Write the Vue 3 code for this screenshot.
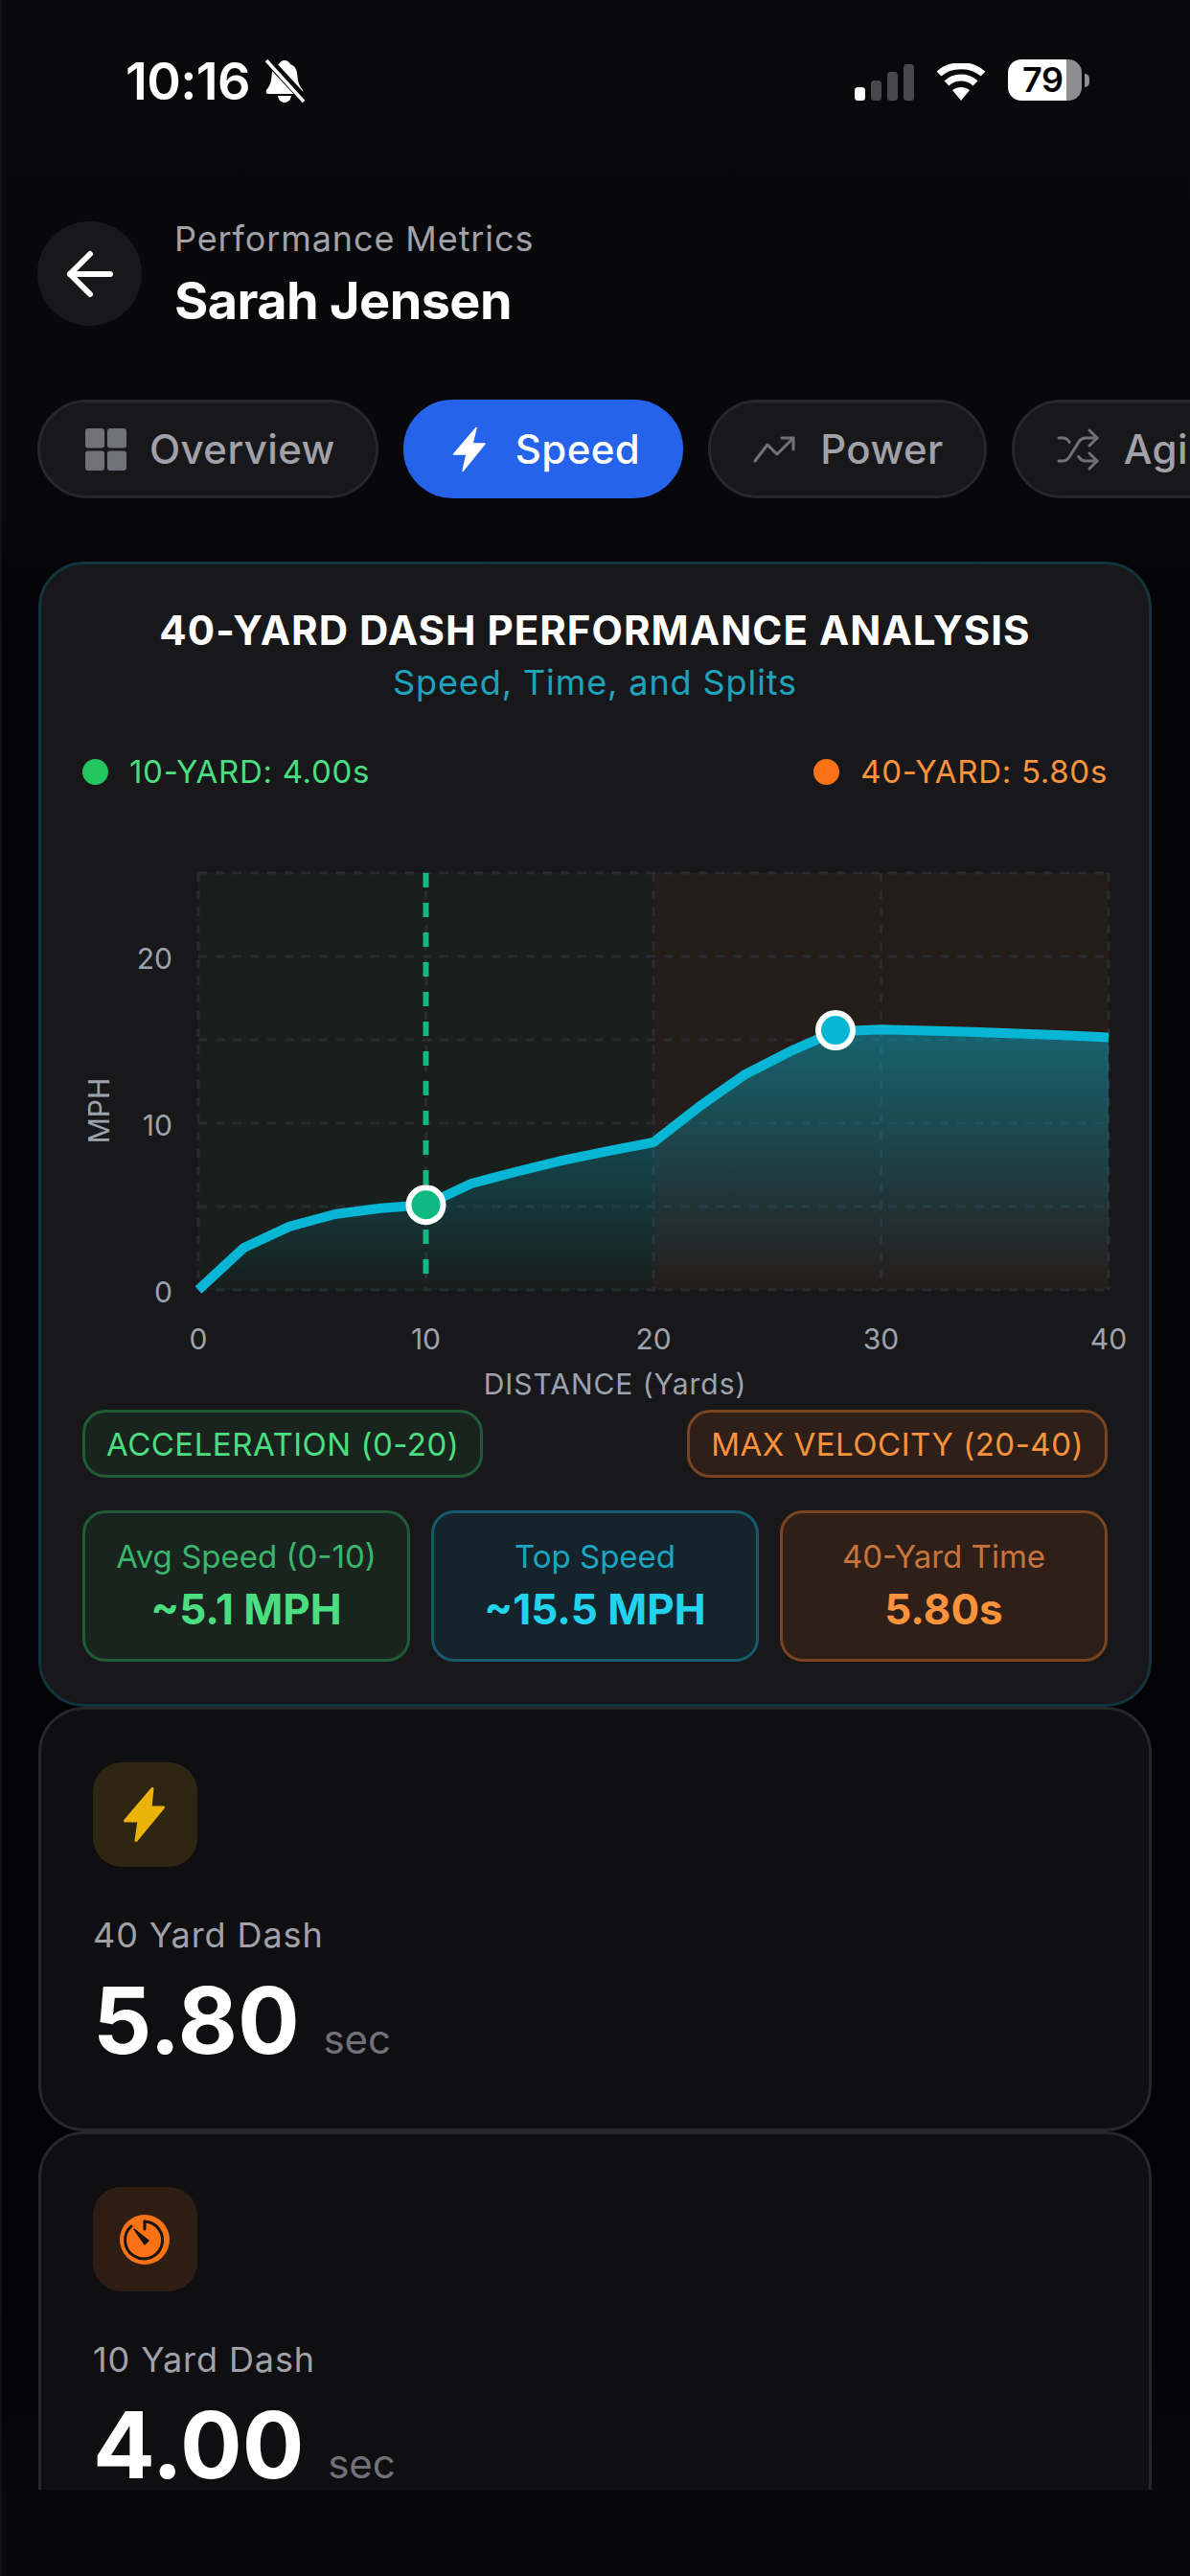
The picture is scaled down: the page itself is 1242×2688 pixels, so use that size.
<script setup>
import { computed } from 'vue'

// mph at every 2 yards
const speeds = [0, 2.53, 3.8, 4.54, 4.9, 5.1, 6.38, 7.1, 7.76, 8.33, 8.85, 10.98, 12.9, 14.3, 15.5, 15.62, 15.55, 15.47, 15.37, 15.27, 15.15]

const xAt = (yards) => 207 + yards * 23.75
const yAt = (mph) => 1347 - mph * 17.4

const linePoints = computed(() => speeds.map((s, i) => `${xAt(i * 2)},${yAt(s)}`).join(' '))
const areaPoints = computed(() => `${linePoints.value} ${xAt(40)},${yAt(0)} ${xAt(0)},${yAt(0)}`)

const gridY = [0, 5, 10, 15, 20, 25]
const gridX = [0, 10, 20, 30, 40]
const yTicks = [0, 10, 20]

const tabs = [
  { id: 'overview', label: 'Overview' },
  { id: 'speed', label: 'Speed', active: true },
  { id: 'power', label: 'Power' },
  { id: 'agility', label: 'Agility' }
]

const stats = [
  { label: 'Avg Speed (0-10)', value: '~5.1 MPH', tone: 'green' },
  { label: 'Top Speed', value: '~15.5 MPH', tone: 'cyan' },
  { label: '40-Yard Time', value: '5.80s', tone: 'orange' }
]
</script>

<template>
  <div class="page">
    <div class="statusbar">
      <div class="status-left">
        <span class="time">10:16</span>
        <svg class="bell" width="42" height="46" viewBox="0 0 42 46">
          <path d="M21 1c3 0 5 2 6 4 6 2 7 7 7.500 13 .5 6 2 10 5.500 14 1 2 0 4-2 4H4c-2 0-3-2-2-4 3.500-4 5-8 5.500-14C8 12 9 7 15 5c1-2 3-4 6-4z" fill="#fff" />
          <path d="M14 38h14c-1 5-4 7-7 7s-6-2-7-7z" fill="#fff" />
          <path d="M3 0 L42 42" stroke="#08080b" stroke-width="9" />
          <path d="M2 1 L41 44" stroke="#fff" stroke-width="3.500" />
        </svg>
      </div>
      <div class="status-right">
        <div class="signal">
          <i class="bar bar-1"></i>
          <i class="bar bar-2"></i>
          <i class="bar bar-3"></i>
          <i class="bar bar-4"></i>
        </div>
        <svg class="wifi" width="52" height="39" viewBox="0 0 52 39">
          <path d="M26 39 L17 28 C22 24 30 24 35 28 Z" fill="#fff" />
          <path d="M11 21 C19 13 33 13 41 21" fill="none" stroke="#fff" stroke-width="7" />
          <path d="M3 11 C15 0 37 0 49 11" fill="none" stroke="#fff" stroke-width="7" />
        </svg>
        <div class="battery">
          <div class="battery-body"><span>79</span></div>
          <i class="battery-nub"></i>
        </div>
      </div>
    </div>

    <div class="header">
      <button class="back" type="button">
        <svg width="72" height="72" viewBox="0 0 24 24" fill="none" stroke="#fff" stroke-width="2" stroke-linecap="round" stroke-linejoin="round">
          <path d="m12 19-7-7 7-7" />
          <path d="M19 12H5" />
        </svg>
      </button>
      <div>
        <div class="eyebrow">Performance Metrics</div>
        <div class="name">Sarah Jensen</div>
      </div>
    </div>

    <div class="tabs">
      <div v-for="tab in tabs" :key="tab.id" class="tab" :class="{ 'tab--active': tab.active }">
        <svg v-if="tab.id === 'overview'" width="48" height="48" viewBox="0 0 48 48" fill="#71717a">
          <rect x="5" y="2" width="20" height="20.500" rx="3" />
          <rect x="28" y="2" width="20" height="20.500" rx="3" />
          <rect x="5" y="25.500" width="20" height="20.500" rx="3" />
          <rect x="28" y="25.500" width="20" height="20.500" rx="3" />
        </svg>
        <svg v-else-if="tab.id === 'speed'" width="48" height="48" viewBox="0 0 48 48">
          <path d="M31 1.500 L7.500 29 H21 L17 46.500 L40 18 H27 Z" fill="#fff" stroke="#fff" stroke-width="1.500" stroke-linejoin="round" />
        </svg>
        <svg v-else-if="tab.id === 'power'" width="48" height="48" viewBox="0 0 24 24" fill="none" stroke="#71717a" stroke-width="1.500" stroke-linecap="round" stroke-linejoin="round">
          <path d="M22 6 13.500 14.500 8.500 9.500 2 18" />
          <path d="M16 6h6v6" />
        </svg>
        <svg v-else width="48" height="48" viewBox="0 0 24 24" fill="none" stroke="#71717a" stroke-width="1.500" stroke-linecap="round" stroke-linejoin="round">
          <path d="m18 14 4 4-4 4" />
          <path d="m18 2 4 4-4 4" />
          <path d="M2 18h1.973a4 4 0 0 0 3.300-1.700l5.454-8.600a4 4 0 0 1 3.300-1.700H22" />
          <path d="M2 6h1.972a4 4 0 0 1 3.600 2.200" />
          <path d="M22 18h-6.041a4 4 0 0 1-3.300-1.800l-.359-.450" />
        </svg>
        <span>{{ tab.label }}</span>
      </div>
    </div>

    <main class="content">
      <section class="chart-card">
        <h2 class="chart-title">40-YARD DASH PERFORMANCE ANALYSIS</h2>
        <p class="chart-sub">Speed, Time, and Splits</p>

        <div class="legend">
          <div class="legend-item legend-item--green"><i></i>10-YARD: 4.00s</div>
          <div class="legend-item legend-item--orange"><i></i>40-YARD: 5.80s</div>
        </div>

        <svg class="chart" width="1070" height="590" viewBox="86 880 1070 590">
          <defs>
            <linearGradient id="areaFill" gradientUnits="userSpaceOnUse" x1="0" y1="1076" x2="0" y2="1347">
              <stop offset="0" stop-color="#06b6d4" stop-opacity="0.46" />
              <stop offset="1" stop-color="#06b6d4" stop-opacity="0" />
            </linearGradient>
          </defs>

          <rect :x="xAt(0)" y="912" :width="xAt(20) - xAt(0)" height="435" fill="#22c55e" fill-opacity="0.04" />
          <rect :x="xAt(20)" y="912" :width="xAt(40) - xAt(20)" height="435" fill="#f97316" fill-opacity="0.06" />

          <line v-for="m in gridY" :key="'h' + m" :x1="xAt(0)" :x2="xAt(40)" :y1="yAt(m)" :y2="yAt(m)" class="grid" />
          <line v-for="d in gridX" :key="'v' + d" :x1="xAt(d)" :x2="xAt(d)" y1="912" y2="1347" class="grid" />

          <polygon :points="areaPoints" fill="url(#areaFill)" />

          <line :x1="xAt(10)" :x2="xAt(10)" y1="912" y2="1332" class="ref-line" />
          <polyline :points="linePoints" class="speed-line" />

          <circle :cx="xAt(10)" :cy="yAt(5.1)" r="18" fill="#10b981" stroke="#fff" stroke-width="6" />
          <circle :cx="xAt(28)" :cy="yAt(15.57)" r="18" fill="#06b6d4" stroke="#fff" stroke-width="6" />

          <text v-for="t in yTicks" :key="'yt' + t" x="180" :y="yAt(t) + 13" text-anchor="end" class="tick">{{ t }}</text>
          <text v-for="d in gridX" :key="'xt' + d" :x="xAt(d)" y="1409" text-anchor="middle" class="tick">{{ d }}</text>
          <text x="642" y="1456" text-anchor="middle" class="tick tick--spaced">DISTANCE (Yards)</text>
          <text x="114" y="1160" text-anchor="middle" transform="rotate(-90 114 1160)" class="tick">MPH</text>
        </svg>

        <div class="zones">
          <span class="zone zone--green">ACCELERATION (0-20)</span>
          <span class="zone zone--orange">MAX VELOCITY (20-40)</span>
        </div>

        <div class="stats">
          <div v-for="s in stats" :key="s.label" class="stat" :class="'stat--' + s.tone">
            <div class="stat-label">{{ s.label }}</div>
            <div class="stat-value">{{ s.value }}</div>
          </div>
        </div>
      </section>

      <section class="metric">
        <div class="metric-icon metric-icon--yellow">
          <svg width="109" height="109" viewBox="0 0 109 109">
            <path d="M62 27.500 L33.500 61 H48 L45 81.500 L73.500 47 H60 Z" fill="#eab308" stroke="#eab308" stroke-width="3" stroke-linejoin="round" />
          </svg>
        </div>
        <div class="metric-label">40 Yard Dash</div>
        <div class="metric-value">5.80 <small>sec</small></div>
      </section>

      <section class="metric">
        <div class="metric-icon metric-icon--orange">
          <svg width="109" height="109" viewBox="0 0 109 109">
            <circle cx="54" cy="55" r="26" fill="#f97316" />
            <path d="M54 36 A19.500 19.500 0 1 1 40 41" fill="none" stroke="#17130f" stroke-width="3" stroke-linecap="round" />
            <path d="M54 36 V44" stroke="#17130f" stroke-width="3" stroke-linecap="round" />
            <path d="M43 44 L58 56 L54 60 Z" fill="#17130f" stroke="#17130f" stroke-width="1.500" stroke-linejoin="round" />
          </svg>
        </div>
        <div class="metric-label">10 Yard Dash</div>
        <div class="metric-value">4.00 <small>sec</small></div>
      </section>
    </main>
  </div>
</template>

<style>
html,
body {
  margin: 0;
  background: #070709;
}
</style>

<style scoped>
.page {
  width: 1242px;
  height: 2688px;
  display: flex;
  flex-direction: column;
  overflow: hidden;
  background: linear-gradient(#09090c 0, #08080b 20%, #030305 24%, #030305 90%, #08080b 97%);
  box-shadow: inset 2px 0 0 #111113;
  font-family: Inter, "Liberation Sans", sans-serif;
  color: #fff;
}

/* status bar */
.statusbar {
  height: 170px;
  flex-shrink: 0;
  display: flex;
  justify-content: space-between;
  align-items: flex-start;
  padding: 62px 105px 0 131px;
  box-sizing: border-box;
}

.status-left {
  display: flex;
  align-items: center;
  gap: 15px;
}

.time {
  font-size: 54px;
  line-height: 46px;
  font-weight: 600;
  letter-spacing: -0.6px;
}

.status-right {
  display: flex;
  align-items: center;
  gap: 23px;
}

.signal {
  display: flex;
  align-items: flex-end;
  gap: 6px;
  height: 39px;
  margin-top: 3px;
}

.bar {
  width: 11px;
  border-radius: 3.500px;
  background: #48484a;
}

.bar-1 { height: 14px; background: #fff; }
.bar-2 { height: 21px; }
.bar-3 { height: 30px; }
.bar-4 { height: 38px; }

.wifi {
  margin-top: 3px;
}

.battery {
  display: flex;
  align-items: center;
  gap: 3px;
}

.battery-body {
  width: 77px;
  height: 43px;
  border-radius: 14px;
  background: linear-gradient(90deg, #fff 61px, #8e8e90 61px);
  color: #000;
  font-size: 36px;
  line-height: 43px;
  font-weight: 600;
  padding-left: 15px;
  box-sizing: border-box;
  letter-spacing: -0.5px;
}

.battery-nub {
  width: 5px;
  height: 14px;
  border-radius: 0 7px 7px 0;
  background: #8e8e90;
}

/* header */
.header {
  display: flex;
  align-items: center;
  gap: 34px;
  padding-left: 39px;
  margin-top: 61px;
  height: 109px;
  flex-shrink: 0;
}

.back {
  width: 109px;
  height: 109px;
  border: none;
  border-radius: 50%;
  background: #18181b;
  padding: 0;
  display: flex;
  align-items: center;
  justify-content: center;
}

.eyebrow {
  font-size: 36px;
  line-height: 48px;
  color: #a1a1aa;
  letter-spacing: 0.9px;
}

.name {
  font-size: 54px;
  line-height: 66px;
  font-weight: 700;
  margin-top: 8px;
  letter-spacing: -0.6px;
}

/* tabs */
.tabs {
  display: flex;
  gap: 26px;
  margin-top: 77px;
  padding-left: 39px;
  flex-shrink: 0;
  overflow: hidden;
}

.tab {
  display: flex;
  align-items: center;
  gap: 24px;
  height: 103px;
  padding: 0 42px;
  box-sizing: border-box;
  flex-shrink: 0;
  border: 3px solid #27272a;
  border-radius: 52px;
  background: #18181b;
  color: #a1a1aa;
  font-size: 42px;
  font-weight: 500;
  letter-spacing: 0.4px;
}

.tab--active {
  background: #2563eb;
  border-color: #2563eb;
  color: #fff;
}

/* content */
.content {
  margin: 66px 40px 0;
  height: 2012px;
  flex-shrink: 0;
  overflow: hidden;
}

.chart-card {
  border: 3px solid #12343e;
  border-radius: 48px;
  background: #18181b;
  padding: 39px 43px 44px;
}

.chart-title {
  margin: 0;
  text-align: center;
  font-size: 42px;
  line-height: 60px;
  font-weight: 700;
  letter-spacing: 1.05px;
}

.chart-sub {
  margin: 0;
  text-align: center;
  font-size: 36px;
  line-height: 48px;
  color: #1fa3bd;
  letter-spacing: 0.9px;
}

.legend {
  display: flex;
  justify-content: space-between;
  margin-top: 45px;
}

.legend-item {
  display: flex;
  align-items: center;
  gap: 22px;
  font-size: 33px;
  line-height: 48px;
  letter-spacing: 0.7px;
}

.legend-item i {
  width: 27px;
  height: 27px;
  border-radius: 50%;
}

.legend-item--green { color: #4ade80; }
.legend-item--green i { background: #22c55e; }
.legend-item--orange { color: #fb923c; }
.legend-item--orange i { background: #f97316; }

.chart {
  display: block;
  margin-top: 50px;
  overflow: visible;
}

.grid {
  stroke: #292b33;
  stroke-width: 3;
  stroke-dasharray: 9 9;
}

.ref-line {
  stroke: #10b981;
  stroke-width: 6;
  stroke-dasharray: 15 16;
}

.speed-line {
  fill: none;
  stroke: #06b6d4;
  stroke-width: 10;
  stroke-linejoin: round;
}

.tick {
  font-size: 30px;
  fill: #9ca3af;
  font-family: Inter, "Liberation Sans", sans-serif;
}

.tick--spaced {
  letter-spacing: 0.95px;
}

.zones {
  display: flex;
  justify-content: space-between;
  margin-top: 2px;
}

.zone {
  height: 71px;
  box-sizing: border-box;
  padding: 0 22px;
  display: flex;
  align-items: center;
  border: 3px solid;
  border-radius: 24px;
  font-size: 33px;
  font-weight: 400;
  letter-spacing: 0.5px;
}

.zone--green {
  color: #4ade80;
  background: #1a241f;
  border-color: #1f5c35;
}

.zone--orange {
  color: #fb923c;
  background: #2e1f19;
  border-color: #7a4420;
}

.stats {
  display: grid;
  grid-template-columns: repeat(3, 1fr);
  gap: 22px;
  margin-top: 34px;
}

.stat {
  height: 158px;
  box-sizing: border-box;
  border: 3px solid;
  border-radius: 24px;
  text-align: center;
  padding-top: 23px;
}

.stat-label {
  font-size: 33px;
  line-height: 45px;
}

.stat-value {
  font-size: 44px;
  line-height: 56px;
  font-weight: 700;
  margin-top: 4px;
}

.stat--green { background: #1a241f; border-color: #1f5c35; }
.stat--green .stat-label { color: #3bb56c; }
.stat--green .stat-value { color: #4ade80; }
.stat--cyan { background: #15232b; border-color: #155a6c; }
.stat--cyan .stat-label { color: #1ba6c2; }
.stat--cyan .stat-value { color: #22d3ee; }
.stat--orange { background: #2e1f19; border-color: #7a4420; }
.stat--orange .stat-label { color: #c8743a; }
.stat--orange .stat-value { color: #fb923c; }

/* metric cards */
.metric {
  height: 443px;
  box-sizing: border-box;
  border: 3px solid #27272a;
  border-radius: 48px;
  background: #0f0f11;
  padding: 55px 54px 0;
}

.metric-icon {
  width: 109px;
  height: 109px;
  border-radius: 30px;
}

.metric-icon svg {
  display: block;
}

.metric-icon--yellow { background: #2e2513; }
.metric-icon--orange { background: #2e1d13; }

.metric-label {
  margin-top: 43px;
  font-size: 36px;
  line-height: 56px;
  color: #a1a1aa;
  letter-spacing: 0.9px;
}

.metric-value {
  margin-top: 13px;
  font-size: 96px;
  line-height: 96px;
  font-weight: 700;
}

.metric-value small {
  font-size: 42px;
  font-weight: 400;
  color: #71717a;
  margin-left: 2px;
}
</style>
